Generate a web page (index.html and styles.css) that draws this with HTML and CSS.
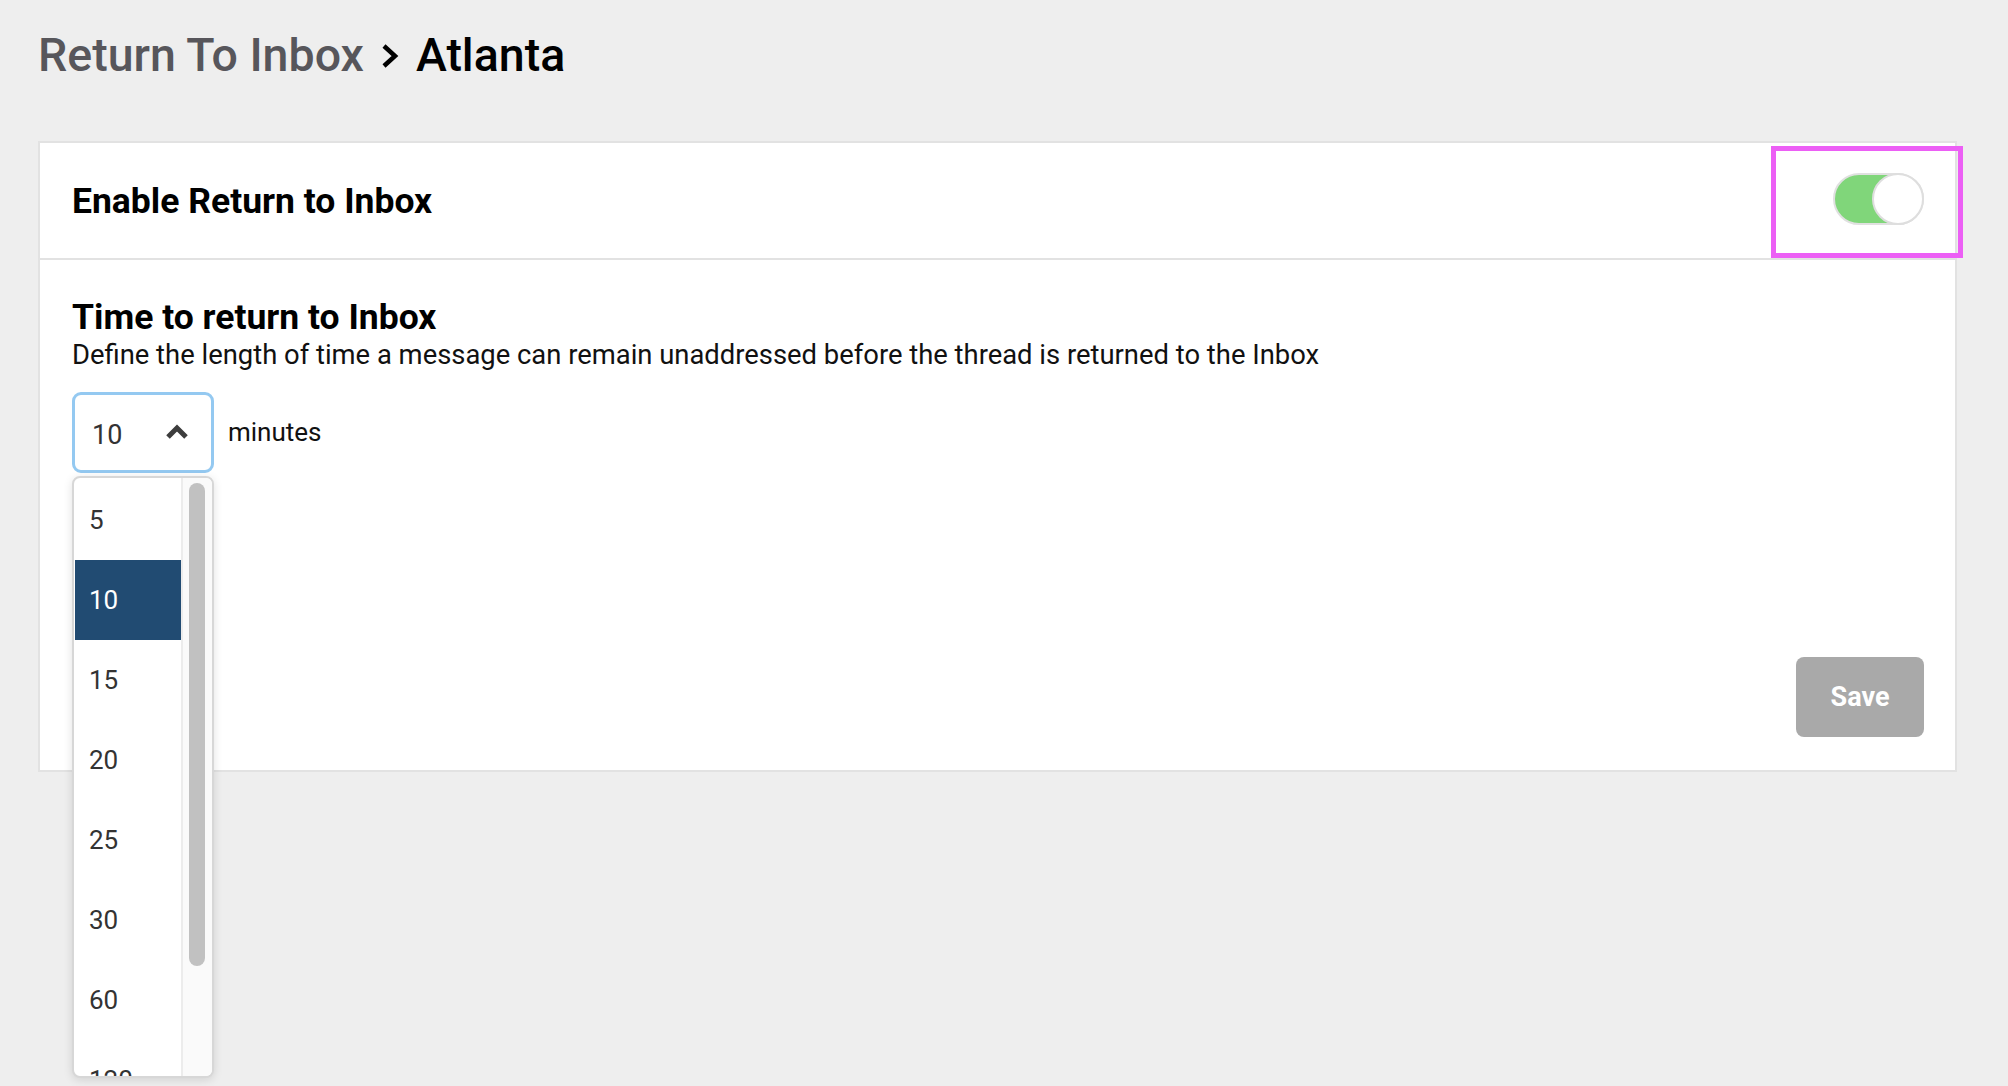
FILE: index.html
```html
<!DOCTYPE html>
<html lang="en">
<head>
    <meta charset="UTF-8">
    <meta name="viewport" content="width=device-width, initial-scale=1.0">
    <title>Return To Inbox - Atlanta</title>
    <link rel="stylesheet" href="styles.css">
</head>
<body>

    <div class="page">
        <h1 class="crumbs">
            <span class="crumb-parent">Return To Inbox</span>
            <svg class="crumb-sep" width="18" height="26" viewBox="0 0 18 26">
                <polyline points="3,3 14,13 3,23" fill="none" stroke="#000" stroke-width="4.5"/>
            </svg>
            <span class="crumb-current">Atlanta</span>
        </h1>

        <div class="card">
            <div class="card-header">
                <h2>Enable Return to Inbox</h2>
                <div class="toggle-wrap">
                    <div class="toggle on">
                        <span class="knob"></span>
                    </div>
                    <span class="highlight"></span>
                </div>
            </div>

            <div class="card-body">
                <h3>Time to return to Inbox</h3>
                <p class="hint">Define the length of time a message can remain unaddressed before the thread is returned to the Inbox</p>

                <div class="time-row">
                    <div class="select-wrap">
                        <div class="select open">
                            <span class="select-value">10</span>
                            <svg class="caret" width="24" height="16" viewBox="0 0 24 16">
                                <polyline points="3,13 12,4 21,13" fill="none" stroke="#3d3d3d" stroke-width="5"/>
                            </svg>
                        </div>
                        <div class="options">
                            <ul class="option-list">
                                <li>5</li>
                                <li class="selected">10</li>
                                <li>15</li>
                                <li>20</li>
                                <li>25</li>
                                <li>30</li>
                                <li>60</li>
                                <li>120</li>
                            </ul>
                            <div class="scroll-track">
                                <div class="scroll-thumb"></div>
                            </div>
                        </div>
                    </div>
                    <span class="unit">minutes</span>
                </div>

                <div class="actions">
                    <button class="save" disabled>Save</button>
                </div>
            </div>
        </div>
    </div>

</body>
</html>
```

FILE: styles.css
```css
html, body {
    height: 100%;
}

body {
    margin: 0;
    padding: 0;
    min-height: 1086px;
    font-family: 'Roboto', 'Liberation Sans', sans-serif;
    background: #eeeeee;
    color: #111;
}

.page {
    min-height: 100%;
    padding: 0 51px 0 38px;
}

.crumbs {
    display: flex;
    align-items: center;
    gap: 17px;
    margin: 0;
    padding: 24px 0 0 0;
    height: 62px;
    font-size: 46.5px;
    font-weight: 500;
    line-height: 62px;
}

.crumb-parent {
    color: #57565b;
}

.crumb-current {
    color: #000;
}

.crumb-sep {
    margin-top: 2px;
}

.card {
    margin-top: 55px;
    background: #fff;
    border: 2px solid #e2e2e2;
}

.card-header {
    display: flex;
    align-items: center;
    justify-content: space-between;
    height: 115px;
    padding: 0 31px 0 32px;
    border-bottom: 2px solid #e2e2e2;
}

.card-header h2 {
    margin: 0;
    font-size: 35.5px;
    font-weight: 700;
    color: #000;
}

.toggle-wrap {
    position: relative;
    margin-top: -3px;
}

.toggle {
    position: relative;
    width: 91px;
    height: 52px;
    border-radius: 26px;
    background: #dcdcdc;
    box-sizing: border-box;
    border: 2px solid #e0e0e0;
}

.toggle.on {
    background: #80d67a;
}

.knob {
    position: absolute;
    top: -2px;
    right: -2px;
    width: 52px;
    height: 52px;
    box-sizing: border-box;
    border-radius: 50%;
    background: #fff;
    border: 2px solid #dedede;
}

/* annotation frame drawn over the toggle */
.highlight {
    position: absolute;
    left: -62px;
    top: -27px;
    width: 192px;
    height: 112px;
    box-sizing: border-box;
    border: 5px solid #ec5ff5;
}

.card-body {
    display: flex;
    flex-direction: column;
    padding: 36px 31px 33px 32px;
}

.card-body h3 {
    margin: 0;
    font-size: 35.5px;
    font-weight: 700;
    line-height: 42px;
    color: #000;
}

.hint {
    margin: 2px 0 0 0;
    font-size: 27.4px;
    line-height: 30px;
    color: #111;
}

.time-row {
    display: flex;
    align-items: center;
    gap: 14px;
    margin-top: 22px;
}

.select-wrap {
    position: relative;
}

.select {
    display: flex;
    align-items: center;
    justify-content: space-between;
    width: 142px;
    height: 81px;
    box-sizing: border-box;
    padding: 4px 22px 0 17px;
    border: 3px solid #94c9f1;
    border-radius: 9px;
    background: #fff;
}

.select-value {
    font-size: 27px;
    color: #333;
}

.caret {
    margin-top: -6px;
}

.unit {
    font-size: 26px;
    color: #111;
    margin-top: -1px;
}

.options {
    position: absolute;
    top: 84px;
    left: 0;
    width: 142px;
    height: 602px;
    box-sizing: border-box;
    display: flex;
    background: #fff;
    border: 2px solid #d7d7d7;
    border-radius: 8px;
    box-shadow: 0 2px 10px rgba(0, 0, 0, 0.12);
    overflow: hidden;
    z-index: 2;
}

.option-list {
    flex: 1;
    margin: 0;
    padding: 2px 0 0 1px;
    list-style: none;
}

.option-list li {
    height: 80px;
    line-height: 80px;
    padding-left: 14px;
    font-size: 26px;
    color: #333;
}

.option-list li.selected {
    background: #214b72;
    color: #fff;
}

.scroll-track {
    width: 31px;
    padding: 5px 0 0 6px;
    box-sizing: border-box;
    background: #fafafa;
    border-left: 2px solid #ececec;
}

.scroll-thumb {
    width: 16px;
    height: 483px;
    border-radius: 8px;
    background: #c1c1c1;
}

.actions {
    display: flex;
    justify-content: flex-end;
    margin-top: 184px;
}

.save {
    width: 128px;
    height: 80px;
    border: none;
    border-radius: 8px;
    background: #a9a9a9;
    color: #fff;
    font-family: inherit;
    font-size: 27px;
    font-weight: 700;
}
```
